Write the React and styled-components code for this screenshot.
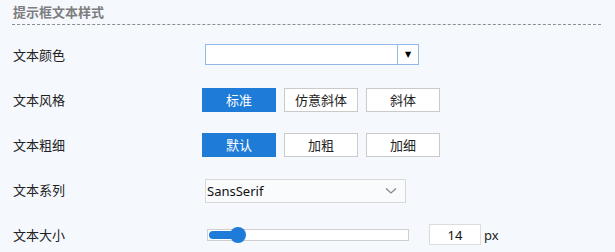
import styled, { createGlobalStyle } from "styled-components";

const GlobalStyle = createGlobalStyle`
  html, body {
    margin: 0;
    padding: 0;
    background: #f5f8fd;
    font-family: "Noto Sans CJK SC", "Noto Sans", "Liberation Sans", sans-serif;
  }
`;

const Panel = styled.div`
  width: 615px;
  height: 252px;
  background: #f5f8fd;
  overflow: hidden;
  box-sizing: border-box;
  padding: 0 14px 0 12px;
`;

const Title = styled.div`
  height: 25px;
  box-sizing: border-box;
  padding: 3px 0 0 1px;
  font-size: 13px;
  font-weight: bold;
  color: #7d7d7d;
  line-height: 18px;
  border-bottom: 1px dashed #8e8e8e;
`;

const Rows = styled.div`
  padding-top: 7px;
`;

const Row = styled.div`
  height: 45px;
  display: flex;
  align-items: center;
`;

const Label = styled.div`
  width: 189px;
  padding-left: 1px;
  font-size: 13px;
  color: #222;
`;

const ColorPicker = styled.div`
  margin-left: 3px;
  display: flex;
  height: 21px;
  border: 1px solid #93b9e8;
  background: #fff;
  box-sizing: border-box;
`;

const ColorField = styled.div`
  width: 191px;
  border-right: 1px solid #93b9e8;
`;

const DropBtn = styled.div`
  width: 20px;
  display: flex;
  align-items: center;
  justify-content: center;
  font-size: 8px;
  color: #000;
  font-family: "DejaVu Sans", sans-serif;
`;

const BtnGroup = styled.div`
  display: flex;
  gap: 8px;
`;

const Choice = styled.div`
  width: 74px;
  height: 24px;
  box-sizing: border-box;
  display: flex;
  align-items: center;
  justify-content: center;
  font-size: 13px;
  background: ${(p) => (p.$active ? "#1e7bd8" : "#fff")};
  color: ${(p) => (p.$active ? "#fff" : "#222")};
  border: 1px solid ${(p) => (p.$active ? "#1e7bd8" : "#cacaca")};
`;

const Select = styled.div`
  margin-left: 3px;
  width: 201px;
  height: 24px;
  box-sizing: border-box;
  border: 1px solid #d8d8d8;
  background: #fafbfd;
  display: flex;
  align-items: center;
  justify-content: space-between;
  padding: 0 8px 0 1px;
  font-family: "Noto Sans", "Liberation Sans", sans-serif;
  font-size: 13px;
  color: #111;
  margin-top: 3px;
`;

const SliderWrap = styled.div`
  margin-left: 5px;
  position: relative;
  width: 202px;
  height: 12px;
  border: 1px solid #cfcfcf;
  background: #fff;
  box-sizing: border-box;
`;

const SliderFill = styled.div`
  position: absolute;
  left: 1px;
  top: 1px;
  height: 8px;
  border-radius: 4px;
  background: #1e7bd8;
`;

const Thumb = styled.div`
  position: absolute;
  top: -3px;
  width: 16px;
  height: 16px;
  border-radius: 50%;
  background: #1e7bd8;
  margin-left: -8px;
`;

const NumBox = styled.div`
  margin-left: 20px;
  width: 52px;
  height: 21px;
  box-sizing: border-box;
  border: 1px solid #dcdcdc;
  background: #fff;
  display: flex;
  align-items: center;
  justify-content: center;
  font-family: "Noto Sans", "Liberation Sans", sans-serif;
  font-size: 13px;
  color: #111;
`;

const Unit = styled.span`
  margin-left: 3px;
  font-family: "Noto Sans", "Liberation Sans", sans-serif;
  font-size: 13px;
  color: #222;
`;

const Chevron = () => (
  <svg width="12" height="8" viewBox="0 0 12 8">
    <path d="M1 1.5 L6 6 L11 1.5" fill="none" stroke="#888" strokeWidth="1.3" />
  </svg>
);

export default function App() {
  const value = 14;
  const pct = 15;
  return (
    <Panel>
      <GlobalStyle />
      <Title>提示框文本样式</Title>
      <Rows>
        <Row>
          <Label>文本颜色</Label>
          <ColorPicker>
            <ColorField />
            <DropBtn>▼</DropBtn>
          </ColorPicker>
        </Row>
        <Row>
          <Label>文本风格</Label>
          <BtnGroup>
            <Choice $active>标准</Choice>
            <Choice>仿意斜体</Choice>
            <Choice>斜体</Choice>
          </BtnGroup>
        </Row>
        <Row>
          <Label>文本粗细</Label>
          <BtnGroup>
            <Choice $active>默认</Choice>
            <Choice>加粗</Choice>
            <Choice>加细</Choice>
          </BtnGroup>
        </Row>
        <Row>
          <Label>文本系列</Label>
          <Select>
            SansSerif
            <Chevron />
          </Select>
        </Row>
        <Row>
          <Label>文本大小</Label>
          <SliderWrap>
            <SliderFill style={{ width: `${pct}%` }} />
            <Thumb style={{ left: `${pct}%` }} />
          </SliderWrap>
          <NumBox>{value}</NumBox>
          <Unit>px</Unit>
        </Row>
      </Rows>
    </Panel>
  );
}
